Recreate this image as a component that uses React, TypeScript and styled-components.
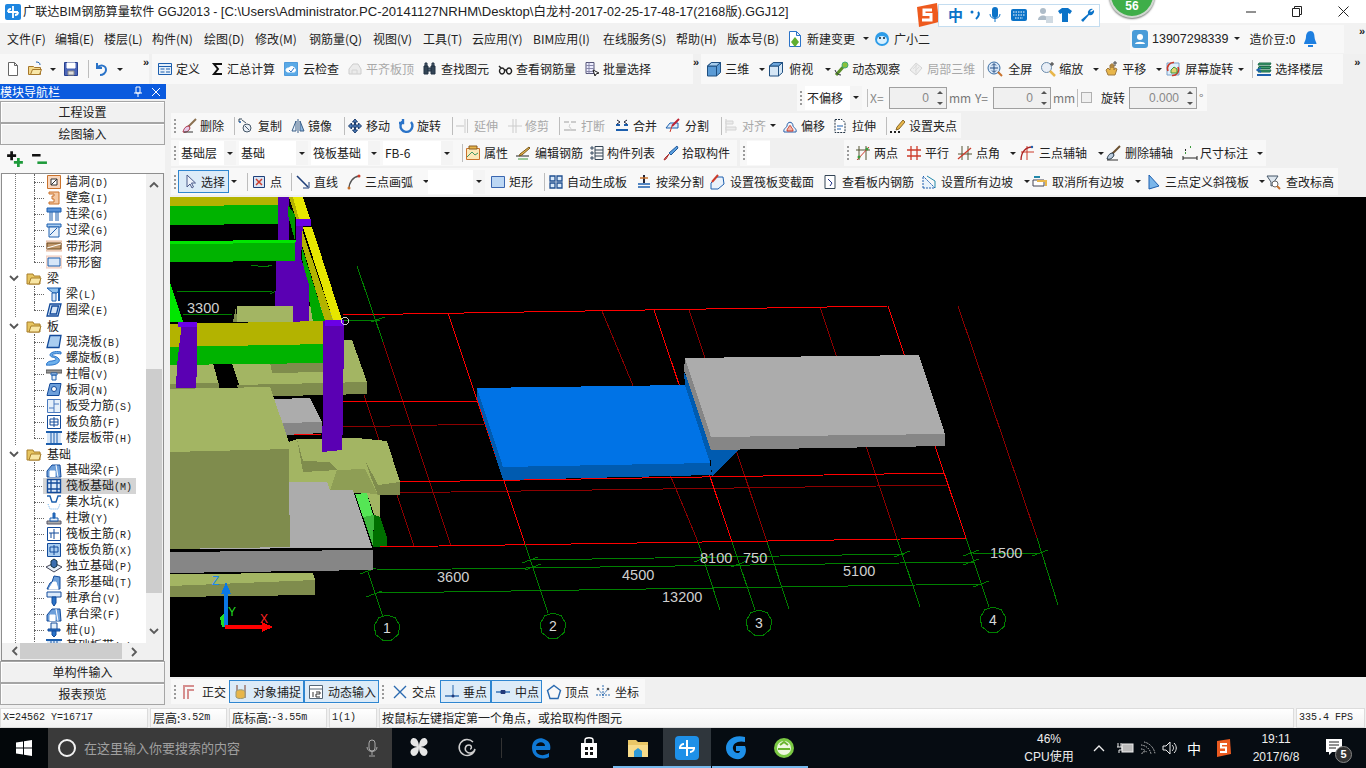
import React from 'react';
import styled, { createGlobalStyle } from 'styled-components';

const Global = createGlobalStyle`
  html, body { margin: 0; padding: 0; background: #f0f0f0; overflow: hidden; }
  * { box-sizing: border-box; }
  #root { width: 1366px; height: 768px; }
`;

const UI = `"Liberation Sans", "Noto Sans CJK SC", sans-serif`;
const CJK = `"Noto Sans CJK SC", "Liberation Sans", sans-serif`;

const Page = styled.div`
  position: relative; width: 1366px; height: 768px; overflow: hidden; display: flex; flex-direction: column;
  background: #f0f0f0; font: 12px/16px ${CJK}; color: #1c1c1c;
`;

/* ---------- title + menu ---------- */
const TitleBar = styled.div`height: 23px; flex: none; background: #fff; display: flex; align-items: center; padding-left: 5px; gap: 2px;`;
const TitleText = styled.div`font: 12.2px/16px ${UI}; white-space: nowrap; color: #222;`;
const TitlePath = styled.span`font-size: 13.1px;`;
const TitleTail = styled.span`font-size: 12.5px;`;
const WinControls = styled.div`position: absolute; right: 0; top: 0; height: 23px; display: flex;`;
const WinBtn = styled.div`width: 46px; height: 23px; display: flex; align-items: center; justify-content: center;`;
const MenuBar = styled.div`height: 31px; flex: none; display: flex; align-items: center; padding-left: 7px; background: #f2f2f2;`;
const MenuItem = styled.div<{ $w?: number; $ml?: number }>`
  flex: none; white-space: nowrap; font: 12px/16px ${CJK}; color: #222;
  ${p => p.$w ? `width:${p.$w}px;` : ''} ${p => p.$ml ? `margin-left:${p.$ml}px;` : ''}
`;
const MenuIconItem = styled(MenuItem)`display: flex; align-items: center; gap: 4px; svg, span { flex: none; }`;
const UserZone = styled.div`
  margin-left: 198px; width: 214px; height: 28px; background: #f8f8f8; display: flex; align-items: center; padding-left: 2px; font: 12px/16px ${UI};
`;
const Phone = styled.span`font: 12.5px/16px ${UI}; margin-left: 4px; color: #222;`;
const Bell = styled.svg`margin-left: 9px; flex: none;`;

/* ---------- toolbars ---------- */
const TopRow = styled.div`height: 30px; flex: none; display: flex; align-items: center;`;
const Bar = styled.div<{ $w: number; $ml?: number; $pl?: number }>`
  flex: none; width: ${p => p.$w}px; margin-left: ${p => p.$ml || 0}px; padding-left: ${p => p.$pl || 0}px;
  height: 100%; display: flex; align-items: center; background: #f8f8f8; white-space: nowrap;
`;
const ToolRowBox = styled.div<{ $h: number; $pt?: number }>`
  height: ${p => p.$h}px; flex: none; display: flex; align-items: stretch; padding-top: ${p => p.$pt || 0}px; padding-bottom: 2px;
`;
const ToolEl = styled.div<{ $w: number; $off?: boolean; $gap?: number }>`
  flex: none; width: ${p => p.$w}px; display: flex; align-items: center; gap: ${p => p.$gap ?? 3}px; font: 12px/16px ${CJK};
  color: ${p => p.$off ? '#a8a8a8' : '#222'};
  svg { flex: none; ${p => p.$off ? 'opacity: .45;' : ''} }
`;
const Caret = styled.span<{ $ml?: number }>`
  display: inline-block; flex: none; width: 0; height: 0; margin-left: ${p => p.$ml ?? 7}px;
  border-left: 3px solid transparent; border-right: 3px solid transparent; border-top: 3px solid #222;
`;
const Sep = styled.span<{ $w?: number }>`
  flex: none; width: ${p => p.$w || 1}px; height: 18px; display: flex; justify-content: center;
  &::before { content: ''; width: 1px; height: 100%; background: #bdbdbd; }
`;
const Grip = styled.span<{ $w?: number }>`
  flex: none; width: ${p => p.$w || 10}px; height: 14px; padding-left: 3px;
  &::before { content: ''; display: block; width: 2px; height: 100%;
    background: repeating-linear-gradient(#9a9a9a 0 2px, transparent 2px 4px); }
`;
const More = styled.span<{ $ml?: number }>`
  flex: none; margin-left: ${p => p.$ml || 0}px; font: bold 11px/11px ${UI}; color: #222; align-self: flex-start; margin-top: 3px; letter-spacing: -1px;
`;
const Spacer = styled.span<{ $w: number }>`flex: none; width: ${p => p.$w}px;`;
const SelectBox = styled.div<{ $w: number; $mr?: number }>`
  flex: none; width: ${p => p.$w}px; margin-right: ${p => p.$mr ?? 3}px; height: 24px; background: #fff; position: relative;
  display: flex; align-items: center; padding-left: 2px; font: 12px/16px ${CJK}; color: #222;
`;
const SelectArrow = styled.span`
  position: absolute; right: 0; top: 0; bottom: 0; width: 12px; background: #f4f4f4; display: flex; align-items: center; justify-content: center;
`;
const Label = styled.span<{ $w?: number; $c?: string }>`
  flex: none; ${p => p.$w ? `width:${p.$w}px;` : ''} color: ${p => p.$c || '#222'}; font: 12px/16px ${CJK};
`;
const Spin = styled.div<{ $w: number }>`
  flex: none; width: ${p => p.$w}px; height: 22px; border: 1px solid #a0a0a0; background: #f0f0f0; display: flex; align-items: center; justify-content: flex-end;
  font: 12px/16px ${UI}; color: #888; position: relative; padding-right: 17px;
`;
const SpinArrows = styled.span`
  position: absolute; right: 3px; top: 3px; bottom: 3px; display: flex; flex-direction: column; justify-content: space-between;
  i { width: 0; height: 0; border-left: 3px solid transparent; border-right: 3px solid transparent; }
  i:first-child { border-bottom: 3px solid #555; }
  i:last-child { border-top: 3px solid #555; }
`;
const Check = styled.span`flex: none; width: 11px; height: 11px; border: 1px solid #b0b0b0; background: #f0f0f0;`;
const Pressed = styled.div<{ $w: number; $gap?: number }>`
  flex: none; width: ${p => p.$w}px; height: 23px; background: #dcebf8; border: 1px solid #2f86d0; display: flex; align-items: center; gap: ${p => p.$gap ?? 4}px; padding-left: 3px; font: 12px/16px ${CJK}; color: #222;
`;
const Work = styled.div`width: 1196px; flex: none; display: flex; flex-direction: column; height: 100%;`;
const Body = styled.div`flex: none; height: 624px; display: flex;`;
const CanvasBox = styled.div`height: 480px; flex: none; background: #000; overflow: hidden;`;
const Drawing = styled.svg`display: block;`;

/* ---------- side panel ---------- */
const Side = styled.div`width: 166px; margin-right: 4px; flex: none; display: flex; flex-direction: column; height: 100%;`;
const SideHead = styled.div`
  height: 15px; flex: none; background: #0a5ade; color: #fff; display: flex; align-items: center; font: 12px/15px ${CJK}; margin-bottom: 2px;
`;
const PinIcon = styled.svg`margin-left: 72px; flex: none;`;
const CloseIcon = styled.svg`margin-left: 7px; flex: none;`;
const SideBtn = styled.div`
  height: 22px; flex: none; width: 165px; background: #f1f1f1; border: 1px solid #a5a5a5; box-shadow: inset 1px 1px 0 #fff; display: flex; align-items: center; justify-content: center;
  font: 12px/16px ${CJK}; color: #222;
`;
const PlusBar = styled.div`height: 28px; flex: none; width: 165px; background: #f8f8f8; display: flex; align-items: center; padding-left: 6px; gap: 7px;`;
const TreeBox = styled.div`
  height: 488px; width: 163px; margin-left: 1px; flex: none; border: 1px solid #8e8e8e; background: #f0f0f0; display: grid;
  grid-template-columns: 144px 16px; grid-template-rows: 469px 16px; position: relative;
`;
const TreeList = styled.div`background: #fff; overflow: hidden; display: flex; flex-direction: column;`;
const Row = styled.div<{ $item?: boolean; $last?: boolean }>`
  height: 16px; flex: none; position: relative; display: flex; align-items: center; white-space: nowrap;
  padding-left: ${p => p.$item ? 41 : 6}px; color: #222; font: 12px/16px ${CJK};
  background-image: linear-gradient(#777 50%, transparent 50%);
  background-size: 1px 2px; background-position: 13px 0; background-repeat: repeat-y;
  ${p => p.$item ? `
    &::before { content: ''; position: absolute; left: 32px; top: 0; height: ${p.$last ? 8 : 16}px; border-left: 1px dotted #666; }
    &::after { content: ''; position: absolute; left: 32px; width: 10px; top: 8px; border-top: 1px dotted #666; }
  ` : ''}
`;
const RowInner = styled.div<{ $sel?: boolean }>`
  display: flex; align-items: center; height: 16px; gap: 4px; padding: 0 4px 0 3px; position: relative; z-index: 1;
  background: ${p => p.$sel ? '#d4d4d4' : 'transparent'};
`;
const Key = styled.span`font: 10px/16px "Liberation Mono", monospace; color: #222;`;
const Folder = styled.div`display: flex; align-items: center; gap: 6px; z-index: 1; background: #fff;`;
const FolderName = styled.span`margin-left: -1px;`;
const VScroll = styled.div`
  grid-column: 2; grid-row: 1; background: #f0f0f0; display: flex; flex-direction: column; align-items: center; position: relative; padding-top: 5px;
`;
const VThumb = styled.div`position: absolute; left: 0; right: 0; top: 195px; height: 224px; background: #cdcdcd;`;
const HScroll = styled.div`grid-column: 1 / 3; grid-row: 2; background: #f0f0f0; position: relative; display: flex; align-items: center; padding-left: 7px;`;
const HThumb = styled.div`position: absolute; left: 18px; width: 102px; top: 0; bottom: 0; background: #cdcdcd;`;
const ArrowBottom = styled.span`position: absolute; bottom: 3px;`;
const ArrowRight = styled.span`position: absolute; right: 22px; top: 2px;`;

/* ---------- status + taskbar ---------- */
const Status = styled.div`height: 20px; flex: none; display: flex; gap: 2px; padding-right: 1px;`;
const Cell = styled.div<{ $w?: number; $grow?: boolean }>`
  ${p => p.$w ? `width:${p.$w}px; flex:none;` : ''} ${p => p.$grow ? 'flex:1;' : ''}
  background: linear-gradient(#ffffff, #f2f2f2); border: 1px solid #dcdcdc; display: flex; align-items: center; padding-left: 2px;
  font: 12px/16px ${CJK}; color: #222; white-space: nowrap;
`;
const Task = styled.div`height: 40px; flex: none; background: #060c12; display: flex; align-items: stretch; color: #eee;`;
const Start = styled.div`width: 48px; flex: none; background: #03070a; display: flex; align-items: center; justify-content: center;`;
const Search = styled.div`width: 344px; flex: none; background: #3a3a3a; display: flex; align-items: center; padding-left: 9px; gap: 7px; position: relative;`;
const SearchText = styled.span`font: 13px/16px ${CJK}; color: #a0a0a0;`;
const Mic = styled.span`position: absolute; left: 316px; top: 11px;`;
const Slot = styled.div<{ $w?: number; $ml?: number; $on?: boolean; $bar?: boolean }>`
  flex: none; width: ${p => p.$w || 48}px; margin-left: ${p => p.$ml || 0}px; display: flex; align-items: center; justify-content: center; position: relative;
  background: ${p => p.$on ? '#2f363c' : 'transparent'};
  ${p => p.$bar ? `&::after { content:''; position:absolute; left:0; right:0; bottom:0; height:2px; background:#76b9ed; }` : ''}
`;
const TaskSep = styled.span`width: 1px; height: 20px; background: #333; align-self: center; flex: none; margin-left: 10px; margin-right: 15px;`;
const TrayCell = styled.div<{ $w: number; $ml?: number }>`
  flex: none; width: ${p => p.$w}px; margin-left: ${p => p.$ml || 0}px; display: flex; flex-direction: column; align-items: center; justify-content: center;
  font: 12px/18px ${UI}; color: #eee; position: relative;
`;
const Ime = styled.span`font: 14px/16px ${CJK}; color: #fff;`;
const Badge = styled.span`
  position: absolute; left: 24px; top: 18px; width: 17px; height: 17px; border-radius: 50%; background: #333; border: 1px solid #888;
  font: bold 11px/15px ${UI}; text-align: center; color: #fff;
`;

/* ---------- overlays ---------- */
const Sogou = styled.div`
  position: absolute; left: 916px; top: 3px; width: 184px; height: 24px; display: flex; align-items: center;
`;
const SogouBar = styled.div`
  margin-left: -1px; width: 162px; height: 23px; background: #fff; border: 1px solid #c4ddf0; display: flex; align-items: center; padding-left: 9px;
`;
const SogouZh = styled.span`font: bold 15px/18px ${CJK}; color: #0b73c8; width: 21px;`;
const Orb = styled.div`
  position: absolute; left: 1109px; top: -28px; width: 46px; height: 46px; border-radius: 50%; background: #3fae49; border: 2px solid #d0d8d0; box-shadow: 0 1px 2px #777;
  display: flex; align-items: flex-end; justify-content: center; padding-bottom: 3px; font: bold 12px/14px ${UI}; color: #fff;
`;

/* ---------- icons ---------- */
const B = '#1d5fae', O = '#c9722c', R = '#cc3b2a', Y = '#e8b64a', GR = '#3c9a3c';
const S = (p: React.SVGProps<SVGPathElement> & { d: string; c?: string; w?: number; f?: string }) =>
  <path d={p.d} stroke={p.c || B} strokeWidth={p.w || 1} fill={p.f || 'none'} strokeDasharray={p.strokeDasharray} />;

const ICONS: Record<string, React.ReactNode> = {
  new: <S d="M3.5 1.5h6l3 3v10h-9z M9.5 1.5v3h3" c="#666" f="#fff" />,
  change: <><S d="M2.5 .5h7l4 4v11h-11z M9.5 .5v4h4" c="#2a73c8" f="#fff" /><path d="M8 6l4 5-4 5-4-5z" fill="#5fae2e" /></>,
  open: <><S d="M1.5 5.5h5l1 1h6v7h-12z" c="#a6772a" f="#f3d98c" /><S d="M3.5 13.5l2-5h9l-2 5z" c="#a6772a" f="#f8e7a8" /><S d="M9 1c3 0 4 1 4 3" c={B} /></>,
  save: <><S d="M1.5 1.5h13v13h-13z" c="#28408e" f="#4c66b8" /><S d="M4 2h8v5H4z" c="#fff" f="#fff" /><S d="M5 10h6v4H5z" c="#888" f="#ddd" /></>,
  undo: <S d="M4 2v5h5 M4 7c3-4 9-3 9 2 0 3-3 5-6 5" c="#2a73c8" w={2} />,
  define: <><S d="M1.5 2.5h13v11h-13z" f="#e6f0fa" /><S d="M1.5 5.5h13 M3.5 8h4 M3.5 11h4 M9 8h4 M9 11h4" /></>,
  sigma: <S d="M12 3H4l4 5-4 5h8" c="#111" w={2} />,
  cloud: <><S d="M1.5 1.5h13v13h-13z" c="#4f9bdc" f="#5aa9e6" /><S d="M3 9c0-2 2-2 3-2 1-2 5-2 5 0 2 0 2 4 0 4H5c-2 0-2-2-2-2z" c="#fff" f="#fff" /><S d="M6 9l2 2 3-4" c="#2a73c8" /></>,
  flush: <><S d="M2 13h12V8l-3-5H6L2 8z" c="#999" f="#ddd" /><S d="M5 13V9h5v4" c="#aaa" /></>,
  binoc: <><S d="M2 5h4v8H2z M9 5h4v8H9z" c="#234" f="#345" /><S d="M3 2h2v3H3z M10 2h2v3h-2z M6 7h3v3H6z" c="#234" f="#567" /></>,
  glasses: <><S d="M5 7a2.5 3 0 1 0 .1 0z M12 7a2.5 3 0 1 0 .1 0z M7.5 9h2 M4 7l-2-2" c="#222" w={1.4} /></>,
  batch: <><S d="M2 1.5h8v11H2z" c="#557" f="#eef" /><S d="M2 4.5h8 M2 7.5h8 M2 10.5h8 M5 1.5v11" c="#88a" /><S d="M9 9l6 3-3 1-1 2z" c="#222" f="#fff" /></>,
  cube: <><S d="M1.5 5l4-3.5h9v10l-4 3.5h-9z" c="#1f4f80" f="#5b9bd5" /><S d="M1.5 5h9v10 M10.5 5l4-3.5" c="#1f4f80" /><S d="M1.5 5l4-3.5h9l-4 3.5z" c="#1f4f80" f="#a7cdec" /></>,
  top: <><S d="M1.5 5l4-3.5h9v10l-4 3.5h-9z" c="#1f4f80" f="#d5e6f5" /><S d="M1.5 5h9v10 M10.5 5l4-3.5" c="#1f4f80" /><S d="M5.5 1.5h9l-4 3.5h-9z" c="#1f4f80" f="#6ba5dc" /></>,
  orbit: <><S d="M3 14l8-9" c="#5a8f2a" w={3} /><circle cx="12" cy="4" r="3" fill="#8ac13c" stroke="#4a7" /><S d="M2 9c1 3 3 5 6 5" c="#334" /></>,
  local3d: <><S d="M2 9l6-7 6 5-6 7z" c="#aaa" f="#e4e4e4" /><S d="M5 8l4-4 M7 10l4-4 M8 2v12" c="#bbb" /></>,
  full: <><circle cx="7" cy="7" r="6" fill="#d8e6f6" stroke="#3a6ea5" /><S d="M7 3v8 M3 7h8 M5 4.5l2-2 2 2 M5 9.5l2 2 2-2" c="#234e86" /><S d="M11 11l4 4" c={O} w={2} /></>,
  zoom: <><circle cx="6.5" cy="6.5" r="5" fill="#e8eef6" stroke="#6a8aaa" /><S d="M10 10l5 5" c={Y} w={2.5} /><S d="M12 1v4 M10 3h4" c="#333" /></>,
  pan: <><S d="M3 9l2 5h7l2-6-2-1-1 2V4h-1v3V3H8v4-3H7v5L5 7z" c="#a07a40" f={Y} /><S d="M12 0v5 M10 2h4" c="#444" /></>,
  rot: <><S d="M2 2h12v12H2z" c="#7aa0c8" f="#dfeefb" /><S d="M3 10C1 5 5 1 9 1.500 M13 6c2 5-2 9-6 8.500" c={R} w={1.6} /><S d="M6 9l3-3 3 2v4H6z" c={GR} f="#e6d270" /></>,
  floor: <><S d="M2 11h12l1-2H3z M2 7.500h12l1-2H3z M2 4h12l1-2H3z" c="#1d6b4a" f="#3d9c6c" /><S d="M5 7L1 9l4 2" c="#1a5fae" w={1.5} /><S d="M1 14h14" c={B} w={2} /></>,
  del: <><S d="M15 1L7 9" c="#8a7050" w={2} /><S d="M8 8c-3 0-5 2-6 6 3 1 6-1 7-4z" c="#a34" f="#e7c9e8" /><S d="M3 14h9" c="#333" /></>,
  copy: <><S d="M2 4V1h3" c="#345" /><circle cx="3" cy="4" r="1" fill={B} /><circle cx="10" cy="10" r="4" fill="#e8eef6" stroke="#456" /><S d="M5 2l4 3 M8 8l4 4" c="#456" /></>,
  mirror: <><S d="M6 3v10H2z" c="#3a5f88" f="#e8f0f8" /><S d="M10 3v10h4z" c="#3a5f88" f="#90b8e0" /><S d="M8 1v14" c="#3a5f88" /></>,
  move: <S d="M8 1l2.500 3h-2v3h3V5l3 3-3 3V9h-3v3h2L8 15l-2.500-3h2V9h-3v2l-3-3 3-3v2h3V4h-2z" c="#1e3f70" f="#4d7db8" />,
  rotate: <S d="M13 4a6 6 0 1 1-8-1 M5 1v4H1" c="#2a73c8" w={2.4} />,
  extend: <><S d="M1 8h8" c="#888" /><S d="M12.500 1v14 M10 1v14" c="#999" /></>,
  trim: <S d="M1 8h14 M6 1v14 M9 1v14" c="#999" />,
  break: <><S d="M2 4h5 M9 4h5 M2 12h12" c="#999" w={2} /><S d="M8 6l-1 3 2 1-1 3" c="#aaa" /></>,
  merge: <><S d="M2 12h12" c={B} w={2} /><S d="M2 7h4 M10 7h4" c={B} w={2} /><S d="M3 2l3 2-3 2 M13 2l-3 2 3 2" c="#223" /></>,
  split: <><S d="M2 10h12V5H6z" c={B} f="#dcebf8" /><S d="M15 1L8 8" c="#b23" w={2} /><S d="M8 8l-2 6" c={R} /></>,
  align: <><S d="M3 1v14" c="#999" /><S d="M3 3h7v3H3z M3 9h10v3H3z" c="#aaa" f="#ddd" /></>,
  offset: <><S d="M2 14c-1-3 2-4 3-6 0-5 6-5 6 0 1 2 4 3 3 6z" c="#2a5fa8" f="#eef4fa" /><S d="M5 13c0-2 1-3 2-4 0-2 2-2 2 0 1 1 2 2 2 4z" c={R} f="#f3b7a8" /></>,
  stretch: <><S d="M3 1.500h7l3 3v10H3z" c="#234" f="#fff" strokeDasharray="2 1" /><S d="M5 8h6 M5 11h4" c={B} /></>,
  hold: <><S d="M14 2L8 9l-1 3 3-1 6-7z" c="#8a6a2a" f={Y} /><S d="M1 14h2 M5 14h2 M9 14h2" c="#222" w={2} /></>,
  attr: <><S d="M1.500 3.500h13v11h-13z" c={O} f="#fbe8b8" /><S d="M2 12l5-5 3 3 3-2" c="#496" /><S d="M4 1h8v3H4z" c="#8a5b20" f={Y} /></>,
  editbar: <><S d="M1 11h13" c="#222" /><S d="M14 2L5 9l-1 2 3-1 8-7z" c="#7a5a20" f={Y} /><S d="M3 14h10" c={GR} /></>,
  list: <><S d="M2 2h2v2H2z M2 7h2v2H2z M2 12h2v2H2z" c="#456" f="#bcd" /><S d="M6 1.500h8v13H6z M6 5h8 M6 8h8 M6 11h8" c="#345" /></>,
  pick: <><S d="M14 1l1 2-7 7-2-2z" c="#245a9a" f="#5aa0e0" /><S d="M6 9l-3 5-2 1 1-2z" c="#a33" f="#e88" /></>,
  p2: <><S d="M4 1v14 M11 1v14 M1 5h14" c="#553" /><S d="M2 15L14 2" c={R} /><circle cx="4" cy="12" r="1.500" fill={GR} /><circle cx="12" cy="4" r="1.500" fill={GR} /></>,
  parallel: <S d="M5 1v14 M11 1v14 M1 5h14 M1 11h14" c={R} w={1.3} />,
  angle: <><S d="M5 1v14 M11 1v14 M1 9h14" c="#553" /><S d="M1 14L14 3" c={R} w={1.3} /></>,
  arc3: <><S d="M8 1v14 M2 7h13" c={R} /><S d="M2 15C2 7 7 2 13 2" c="#a22" w={1.3} /><circle cx="13" cy="2" r="1.200" fill={B} /></>,
  delaxis: <><S d="M15 1L7 9" c="#6a5030" w={2} /><S d="M8 8c-3 0-5 2-6 6 3 1 6-1 7-4z" c="#234" f="#bcd" /><S d="M2 15h11" c="#333" /></>,
  dim: <><S d="M1 13h14 M1 11v4 M15 11v4" c="#222" /><S d="M3 8h1 M8 2h1" c={GR} w={2} /><S d="M3 5h1" c="#222" w={2} /></>,
  cursor: <S d="M5 1v12l3-3 2 4 1.500-1-2-4h4z" c="#4a5a8a" f="#eef2fa" />,
  point: <><S d="M2.500 2.500h11v11h-11z" c="#1f3f7a" f="#d8e4f4" /><S d="M5 5l6 6 M11 5l-6 6" c={R} w={1.5} /></>,
  line: <><S d="M2 2l11 11" c="#1f3f7a" w={1.6} /><S d="M14 8v6H8" c="#1f3f7a" /></>,
  arc: <><S d="M3 15C3 8 7 3 13 2" c="#555" w={1.3} /><circle cx="13" cy="2" r="1.500" fill={R} /><circle cx="3" cy="14" r="1.500" fill={O} /></>,
  rect: <S d="M1.500 2.500h13v11h-13z" c="#3a66b0" f="#bcd7f4" />,
  auto: <S d="M2 2h5v5H2z M9 2h5v5H9z M2 9h5v5H2z M9 9h5v5H9z" c="#1f4f90" f="#d8e8f8" w={1.3} />,
  beamsplit: <><S d="M2 13h12 M2 10h12" c={B} w={1.5} /><S d="M8 1v8" c="#223" w={2} /><S d="M4 4h8" c={O} w={1.5} /></>,
  section: <><S d="M1 9l6-6h6l1 7-6 5H1z" c={B} f="#eaf2fb" /><S d="M8 1L2 8" c={R} w={2} /></>,
  viewbar: <><S d="M3 1.500h10v13H3z" c="#345" f="#fff" /><S d="M6 5l4 4-2 3" c="#238" /></>,
  slope: <><S d="M2 14V2l12 12z" c={B} f="#eaf3fb" strokeDasharray="2 1" /><S d="M6 2l8 5v7" c="#28a" /></>,
  unslope: <><S d="M1 12h11V6H1z" c="#445" f="#fff" /><S d="M5 7h9v5" c={Y} w={2} /><S d="M2 3h6" c="#28a" w={2} /></>,
  tilt: <S d="M3 1v14l10-3z" c={B} f="#7ab6ea" />,
  elev: <><S d="M2 2h11l-4 6v3l-3 1V8z" c="#456" f="#dde6ee" /><circle cx="10" cy="10" r="3" fill="#fff" stroke="#666" /><S d="M12 12l3 3" c={O} w={2} /></>,
  ortho: <S d="M3 15V2h10 M7 15V6h6" c="#d68f8f" w={2} />,
  snap: <><S d="M4 1v13 M12 1v13" c="#7a3f2a" /><S d="M3 8c0-3 9-3 9 0v5c-1 2-8 2-9 0z" c="#997" f={Y} /></>,
  dyn: <><S d="M1.500 1.500h13v13h-13z" c="#567" f="#fff" /><S d="M1.500 5h13" c="#567" /><S d="M5 8v5 M8 8h4v2H8v3h4" c="#333" /></>,
  cross: <S d="M2 2l12 12 M14 2L2 14" c="#2a6ab0" w={1.4} />,
  perp: <><S d="M1 12h14" c="#2a6ab0" w={1.4} /><S d="M9 1v11" c="#2a6ab0" /><circle cx="9" cy="12" r="1.500" fill="#223a7a" /></>,
  mid: <><S d="M1 8h14" c="#2a6ab0" w={1.4} /><S d="M6 6.500h4v3H6z" c="#223a7a" f="#223a7a" /></>,
  vertex: <S d="M8 1.500l6.500 5-2.500 8H4l-2.500-8z" c="#2a6ab0" w={1.4} />,
  coord: <><S d="M8 1v13 M1 11h14 M3 5l5 6 5-6" c="#2a6ab0" strokeDasharray="2 1" /><circle cx="3" cy="5" r="1.300" fill="#555" /><circle cx="13" cy="5" r="1.300" fill="#555" /></>,
  /* tree */
  wallhole: <><S d="M1.500 1.500h13v13h-13z" c={O} f="#f8d8c0" /><S d="M5 5h6v6H5z" c="#333" f="#fff" /><S d="M5 11l6-6" c="#333" /></>,
  niche: <S d="M3 2h10v12H3v-2h5V9H6V6h2V4H3z" c={O} f="#f4c9a4" />,
  lintel: <><S d="M1 2h14v4H1z" c={B} f="#5a93d8" /><S d="M4 6v9 M12 6v9 M6 6v9 M10 6v9" c={B} /></>,
  over: <><S d="M1 2h14v3H1z" c={B} f="#a9cdf0" /><S d="M3 5h10v10H3z" c={B} f="#e6f0fa" /><S d="M4 13l7-7" c={B} /></>,
  strip: <><S d="M0 3h16v10H0z" c="#e4b8a0" f="#f6dcc8" /><S d="M1 5h14v6H1z" c="#6b4a20" f="#c0976a" /><S d="M1 10l14-4" c="#fff" /></>,
  stripwin: <><S d="M0 2h16v12H0z" c="#f0c8b8" f="#fae6dc" /><S d="M2 4h12v8H2z" c={B} f="#d6e6f8" /></>,
  beam: <><S d="M1 2h14l-4 5H7z" c={B} f="#8fc0ec" /><S d="M6 7h4v8H6z" c={B} f="#d6e6f8" /><S d="M13 2v13" c={B} w={2} /></>,
  ring: <S d="M4 2h11l-3 12H1z M6 4h6.500l-2 8H4z" c="#124a9a" f="#d6e6f8" w={1.3} />,
  slab: <S d="M4 1.500h11l-2 12H1z" c="#124a9a" f="#a9cdf0" w={1.3} />,
  spiral: <S d="M15 2C6 0 1 5 6 7c5 1 6 3 0 4-3 0-5 1-6 4 8 1 15-2 13-6-2-3-7-3-7-4 0-1 5-2 9-1z" c="#2a73c8" f="#6db0ec" />,
  cap: <><S d="M0 4h16v3H0z" c="#555" f="#999" /><S d="M5 7h6v2H5z M6 9h4v5H6z" c={B} f="#e6f0fa" /></>,
  hole: <><S d="M4 1.500h11l-2 12H1z" c="#124a9a" f="#6d9fda" /><circle cx="8" cy="7" r="2.500" fill="#fff" stroke="#124a9a" /></>,
  sbar: <><S d="M1.500 1.500h13v13h-13z" c="#4a7ac0" f="#e6f0fa" /><S d="M8 2v12 M8 6h5 M3 10h5" c="#4a7ac0" /></>,
  nbar: <><S d="M1.500 1.500h13v13h-13z" c="#124a9a" f="#fff" /><S d="M4 5h8v6H4z M4 8h8 M8 3v10" c="#124a9a" /></>,
  band: <><S d="M1 3h14v10H1z" c="none" f="#d6e6f8" /><S d="M0 2h16 M0 14h16" c={B} w={2} /><S d="M5 3v10 M8 3v10 M11 3v10" c={B} /></>,
  fbeam: <><S d="M1 15V9l5-6h8l1 12z" c="#124a9a" f="#6d9fda" /><S d="M4 15V9h5v6" c="#fff" f="#fff" /><S d="M10 3l2 12" c="#fff" /></>,
  raft: <><S d="M1.500 1.500h13v13h-13z" c="#124a9a" f="#dceafa" w={1.4} /><S d="M5 1.500v13 M11 1.500v13 M1.500 5h13 M1.500 11h13" c="#124a9a" w={1.3} /></>,
  pit: <><S d="M1 2h3l2 6h4l2-6h3" c="#1a5fae" w={1.4} /><S d="M2 10l2 5h8l2-5" c="#6db0ec" strokeDasharray="1 1" /></>,
  pier: <><S d="M1 11h14v3H1z" c="#556" f="#aaa" /><S d="M4 8h8v3H4z" c={B} f="#e6f0fa" /><S d="M7 3h2v5H7z" c={B} f="#2a73c8" /></>,
  rmain: <><S d="M1.500 1.500h13v13h-13z" c="#124a9a" f="#fff" /><S d="M8 3v10 M3 7h10 M5 7v5" c="#124a9a" /></>,
  rneg: <><S d="M1.500 1.500h13v13h-13z" c="#124a9a" f="#a9cdf0" /><S d="M4 5h8v5H4z M8 3v10" c="#124a9a" /></>,
  iso: <><S d="M0 9l8-4 8 4-8 5z" c="#445" f="#e6f0fa" /><S d="M5 3l3-2 3 2v5l-3 2-3-2z" c="#134" f="#3a6eb0" /></>,
  strip2: <><S d="M1 15l3-6 2-1 2-6 6 1v12z" c="#124a9a" f="#6d9fda" /><S d="M3 15l3-5 1-2h3l2 7z" c="#fff" f="#fff" /></>,
  pilecap: <><S d="M1 2h14v5H1z" c="#124a9a" f="#dceafa" /><S d="M6 7h4v6L8 16l-2-3z" c="#124a9a" f="#2a73c8" /></>,
  pile: <><S d="M5 1h6v7H5z" c="#124a9a" f="#e6f0fa" /><S d="M2 7h12v2H2z" c="#124a9a" f="#2a73c8" /><S d="M6 9h4v4l-2 2-2-2z" c="#124a9a" f="#2a73c8" /></>,
  folder: <><S d="M1 4h6l1 2h6v8H1z" c="#a87f2a" f="#e7c560" /><S d="M3 14l2-6h10l-2 6z" c="#a87f2a" f="#f8e6a4" /></>,
  plus: <><S d="M5 1v8 M1 5h8" c="#111" w={2.4} /><S d="M11 7v8 M7 11h8" c="#1d9a3a" w={2.4} /></>,
  minus: <><S d="M1 4h8" c="#111" w={2.4} /><S d="M6 11h9" c="#1d9a3a" w={2.4} /></>,
};
const I: React.FC<{ n: string; s?: number }> = ({ n, s = 16 }) =>
  <svg width={s} height={s} viewBox="0 0 16 16">{ICONS[n]}</svg>;

type T = [string, string, number, boolean?, boolean?, number?];
const Tool: React.FC<{ t: T }> = ({ t: [n, l, w, caret, off, gap] }) => (
  <ToolEl $w={w} $off={off} $gap={gap}><I n={n} /><span>{l}</span>{caret && <Caret />}</ToolEl>
);

const Chev: React.FC<{ d: 'up' | 'down' | 'left' | 'right'; c?: string }> = ({ d, c = '#5a5a5a' }) => {
  const pts = { up: '2,8 6,4 10,8', down: '2,4 6,8 10,4', left: '8,2 4,6 8,10', right: '4,2 8,6 4,10' }[d];
  return <svg width="12" height="12" viewBox="0 0 12 12"><polyline points={pts} fill="none" stroke={c} strokeWidth="1.800" /></svg>;
};

/* ---------- tree data ---------- */
type N = { f?: string; i?: string; l?: string; k?: string; sel?: boolean; last?: boolean };
const TREE: N[] = [
  { i: 'wallhole', l: '墙洞', k: '(D)' }, { i: 'niche', l: '壁龛', k: '(I)' }, { i: 'lintel', l: '连梁', k: '(G)' }, { i: 'over', l: '过梁', k: '(G)' },
  { i: 'strip', l: '带形洞' }, { i: 'stripwin', l: '带形窗', last: true },
  { f: '梁' }, { i: 'beam', l: '梁', k: '(L)' }, { i: 'ring', l: '圈梁', k: '(E)', last: true },
  { f: '板' }, { i: 'slab', l: '现浇板', k: '(B)' }, { i: 'spiral', l: '螺旋板', k: '(B)' }, { i: 'cap', l: '柱帽', k: '(V)' }, { i: 'hole', l: '板洞', k: '(N)' },
  { i: 'sbar', l: '板受力筋', k: '(S)' }, { i: 'nbar', l: '板负筋', k: '(F)' }, { i: 'band', l: '楼层板带', k: '(H)', last: true },
  { f: '基础' }, { i: 'fbeam', l: '基础梁', k: '(F)' }, { i: 'raft', l: '筏板基础', k: '(M)', sel: true }, { i: 'pit', l: '集水坑', k: '(K)' }, { i: 'pier', l: '柱墩', k: '(Y)' },
  { i: 'rmain', l: '筏板主筋', k: '(R)' }, { i: 'rneg', l: '筏板负筋', k: '(X)' }, { i: 'iso', l: '独立基础', k: '(P)' }, { i: 'strip2', l: '条形基础', k: '(T)' },
  { i: 'pilecap', l: '桩承台', k: '(V)' }, { i: 'fbeam', l: '承台梁', k: '(F)' }, { i: 'pile', l: '桩', k: '(U)' }, { i: 'band', l: '基础板带', k: '(W)' },
];

/* ---------- canvas data ---------- */
type Ln = [number, number, number, number];
const RED: Ln[] = [
  [343, 315, 888, 306], [343, 402, 477, 401], [373, 547, 967, 538], [400, 482, 945, 473], [286, 435, 322, 434],
  [448, 313, 525, 544], [654, 310, 732, 542], [888, 306, 966, 538],
];
const DARK: Ln[] = [
  [343, 427, 485, 424], [380, 493, 948, 485], [364, 395, 414, 546], [383, 342, 451, 546], [689, 310, 767, 542],
  [820, 307, 897, 539], [958, 306, 1037, 538], [602, 311, 698, 542],
];
const GREEN: Ln[] = [
  [357, 266, 383, 342], [525, 544, 548, 613], [732, 542, 755, 610], [966, 538, 989, 607], [767, 542, 789, 609], [897, 539, 920, 607],
  [1037, 538, 1058, 605], [698, 542, 720, 610], [368, 572, 383, 617],
  [377, 570, 975, 562], [530, 560, 905, 554], [973, 553, 1040, 553], [377, 593, 983, 584], [177, 292, 273, 291], [183, 315, 233, 314], [343, 320, 380, 320],
  [360, 574, 376, 568], [366, 597, 382, 591], [522, 563, 538, 557], [525, 570, 541, 564], [694, 562, 710, 556], [731, 567, 747, 561], [894, 557, 910, 551], [963, 556, 979, 550],
  [963, 565, 979, 559], [973, 587, 989, 581], [1032, 556, 1048, 550], [270, 294, 280, 289], [371, 322, 385, 317], [251, 265, 265, 267], [265, 267, 272, 265],
];
type Pg = [string, string];
const SHAPES: Pg[] = [
  ['170,197 278,197 278,206 170,206', '#b3b300'],
  ['170,206 278,205 278,224 170,225', '#00b300'],
  ['278,197 289,197 289,240 295,240 295,322 275,322 276,260 278,240', '#5a00b3'],
  ['288,205 295,215 295,241 288,215', '#009a00'],
  ['170,241 296,240 296,261 170,262', '#00b300'],
  ['170,241 296,240 296,243 170,244', '#00e600'],
  ['237,306 325,306 340,322 236,322', '#a3b563'],
  ['236,306 237,322 233,322', '#7f8c4d'],
  ['302,247 325,321 313,322 302,258', '#00a800'],
  ['296,226 303,226 301,258 309,285 309,322 293,322', '#5a00b3'],
  ['296,219 311,219 311,226 296,226', '#6a00e6'],
  ['289,197 293,197 299,219 296,219', '#b3b300'],
  ['293,197 303,197 310,219 299,219', '#e6e600'],
  ['302,230 333,320 325,321 302,245', '#b3b300'],
  ['303,227 312,227 342,320 333,320', '#e6e600'],
  ['170,282 183,322 170,322', '#00e600'],
  ['170,365 213,363 219,385 219,389 170,389', '#a3b563'],
  ['170,384 219,383 219,389 170,389', '#7f8c4d'],
  ['232,363 326,360 326,340 352,340 367,382 240,387', '#a3b563'],
  ['270,362 323,361 323,372 272,373', '#7f8c4d'],
  ['237,385 367,382 367,394 240,397', '#7f8c4d'],
  ['170,324 326,321 326,345 170,347', '#b3b300'],
  ['170,347 326,344 326,363 170,365', '#00b300'],
  ['182,322 197,322 197,367 196,388 176,388 177,365', '#5a00b3'],
  ['178,322 197,322 197,327 178,327', '#6a00e6'],
  ['273,399 310,398 322,422 282,423', '#acacac'],
  ['282,423 322,422 322,433 285,435', '#868686'],
  ['170,389 270,387 289,442 289,450 170,452', '#a3b563'],
  ['170,452 290,449 290,547 170,549', '#7f8c4d'],
  ['289,442 297,439 357,438 387,441 400,482 400,495 377,495 353,490 330,490 327,482 289,482', '#a3b563'],
  ['297,439 303,472 337,470 330,462 303,461', '#7f8c4d'],
  ['337,470 365,469 378,495 330,490', '#8e9e55'],
  ['378,485 400,482 400,495 378,495', '#7f8c4d'],
  ['365,460 378,485 378,495 372,480', '#7f8c4d'],
  ['323,321 344,320 343,420 342,450 322,452 323,400', '#5a00b3'],
  ['325,320 344,320 344,326 325,326', '#6a00e6'],
  ['289,482 327,482 330,490 353,490 372,548 170,549 290,547', '#acacac'],
  ['170,552 373,550 373,570 170,573', '#868686'],
  ['367,493 380,495 380,517 374,515', '#a3b563'],
  ['355,494 367,493 373,515 363,517', '#55e655'],
  ['363,517 374,515 373,546', '#3cb83c'],
  ['374,515 380,517 387,537 387,546 373,547', '#007000'],
  ['170,574 313,573 315,580 170,586', '#a3b563'],
  ['170,586 315,580 315,595 170,597', '#7f8c4d'],
  ['477,388 503,467 503,480 477,398', '#005bb0'],
  ['503,467 710,463 712,475 503,480', '#005bb0'],
  ['477,388 685,385 710,463 503,467', '#0073e6'],
  ['684,372 690,385 712,450 710,463 685,385', '#005bb0'],
  ['710,450 738,450 712,476', '#005bb0'],
  ['685,358 711,437 711,450 684,370', '#868686'],
  ['711,437 945,434 945,446 711,450', '#868686'],
  ['685,358 919,355 945,434 711,437', '#acacac'],
];
const DIMS: [string, number, number][] = [
  ['3300', 187, 313], ['3600', 437, 582], ['4500', 622, 580], ['13200', 662, 602], ['8100', 700, 563], ['750', 743, 563], ['5100', 843, 576], ['1500', 990, 558],
];
const AXES: [string, number, number][] = [['1', 387, 628], ['2', 553, 626], ['3', 759, 623], ['4', 993, 620]];
const ring = (x: number, y: number) =>
  Array.from({ length: 9 }, (_, i) => {
    const a = (i / 9) * Math.PI * 2 - Math.PI / 2;
    return `${(x + 13 * Math.cos(a)).toFixed(1)},${(y + 13 * Math.sin(a)).toFixed(1)}`;
  }).join(' ');

const Scene: React.FC = () => (
  <Drawing width="1196" height="480" viewBox="170 197 1196 480" shapeRendering="crispEdges">
    {DARK.map((l, i) => <line key={i} x1={l[0]} y1={l[1]} x2={l[2]} y2={l[3]} stroke="#8c0000" />)}
    {RED.map((l, i) => <line key={i} x1={l[0]} y1={l[1]} x2={l[2]} y2={l[3]} stroke="#ff0000" />)}
    {GREEN.map((l, i) => <line key={i} x1={l[0]} y1={l[1]} x2={l[2]} y2={l[3]} stroke="#008000" />)}
    {AXES.map(([t, x, y]) => (
      <g key={t}>
        <polygon points={ring(x, y)} fill="none" stroke="#008000" />
        <text x={x} y={y + 5} textAnchor="middle" fontFamily="Liberation Sans" fontSize="14" fill="#d8d8d8">{t}</text>
      </g>
    ))}
    {SHAPES.map(([p, c], i) => <polygon key={i} points={p} fill={c} />)}
    {DIMS.map(([t, x, y]) => <text key={t} x={x} y={y} fontFamily="Liberation Sans" fontSize="14.500" fill="#cfcfcf">{t}</text>)}
    <circle cx="345" cy="321" r="3.500" fill="none" stroke="#ccc" />
    <polygon points="220,617 225,612 226,627 222,627" fill="#22dd22" />
    <rect x="224" y="590" width="4" height="37" fill="#0a78e6" />
    <polygon points="226,582 221,594 231,594" fill="#0a78e6" />
    <rect x="225" y="625" width="38" height="4" fill="#ff0000" />
    <polygon points="262,622 273,627 262,632" fill="#ff0000" />
    <text x="212" y="585" fontFamily="Liberation Sans" fontSize="12" fill="#1a88f0">Z</text>
    <text x="228" y="616" fontFamily="Liberation Sans" fontSize="12" fill="#22dd22">Y</text>
    <text x="260" y="623" fontFamily="Liberation Sans" fontSize="12" fill="#ff2222">X</text>
  </Drawing>
);

const App: React.FC = () => (
  <Page>
    <Global />
    <TitleBar>
      <svg width="16" height="16" viewBox="0 0 16 16"><rect width="16" height="16" rx="2" fill="#1e86e0" /><path d="M8 2v12 M3 8h10 M3 8a3 3 0 0 1 3-3 M13 8a3 3 0 0 1-3 3" stroke="#fff" strokeWidth="1.800" fill="none" /></svg>
      <TitleText>广联达BIM钢筋算量软件 GGJ2013 - <TitlePath>[C:\Users\Administrator.PC-20141127NRHM\Desktop\</TitlePath><TitleTail>白龙村-2017-02-25-17-48-17(2168版).GGJ12]</TitleTail></TitleText>
    </TitleBar>
    <MenuBar>
      {[['文件(F)', 48], ['编辑(E)', 49], ['楼层(L)', 48], ['构件(N)', 52], ['绘图(D)', 51], ['修改(M)', 54], ['钢筋量(Q)', 64], ['视图(V)', 50], ['工具(T)', 49], ['云应用(Y)', 61], ['BIM应用(I)', 70], ['在线服务(S)', 73], ['帮助(H)', 51], ['版本号(B)', 60]].map(([l, w]) => (
        <MenuItem key={l as string} $w={w as number}>{l}</MenuItem>
      ))}
      <MenuIconItem $w={77}><I n="change" /><span>新建变更</span><Caret $ml={4} /></MenuIconItem>
      <MenuIconItem $w={58} $ml={10}>
        <svg width="16" height="16" viewBox="0 0 16 16"><ellipse cx="8" cy="8" rx="7" ry="7" fill="#2d9ce8" /><ellipse cx="8" cy="9" rx="5" ry="4" fill="#d8f0ff" /><circle cx="6" cy="7" r="1" fill="#123" /><circle cx="10" cy="7" r="1" fill="#123" /></svg>
        <span>广小二</span>
      </MenuIconItem>
      <UserZone>
        <svg width="16" height="18" viewBox="0 0 16 18"><rect width="16" height="18" rx="3" fill="#4a9cd8" /><circle cx="8" cy="7" r="3" fill="#fff" /><path d="M3 14c0-3 10-3 10 0z" fill="#fff" /></svg>
        <Phone>13907298339</Phone><Caret $ml={6} />
        <MenuItem $ml={9}>造价豆:0</MenuItem>
        <Bell width="13" height="18" viewBox="0 0 13 18"><path d="M6.500 1c3 0 4 3 4 6s2 5 2 7H0c0-2 2-4 2-7s1.500-6 4.500-6z" fill="#1e7fe0" /><rect x="4" y="15" width="5" height="2" fill="#1e7fe0" /></Bell>
      </UserZone>
      <More $ml={15}>»</More>
    </MenuBar>
    <TopRow>
      <Bar $w={149} $pl={5}>
        <ToolEl $w={22}><I n="new" /></ToolEl>
        <ToolEl $w={36}><I n="open" /><Caret $ml={4} /></ToolEl>
        <ToolEl $w={21}><I n="save" /></ToolEl>
        <Sep $w={9} />
        <ToolEl $w={28}><I n="undo" /><Caret $ml={5} /></ToolEl>
        <More $ml={22}>»</More>
      </Bar>
      <Bar $w={541} $ml={3} $pl={5}>
        <Tool t={['define', '定义', 53]} />
        <Tool t={['sigma', '汇总计算', 73, false, false, 1]} />
        <Tool t={['cloud', '云检查', 64, false, false, 4]} />
        <Tool t={['flush', '平齐板顶', 75, false, true]} />
        <Tool t={['binoc', '查找图元', 75]} />
        <Tool t={['glasses', '查看钢筋量', 87]} />
        <Tool t={['batch', '批量选择', 72]} />
      </Bar>
      <More $ml={0}>»</More>
      <Bar $w={642} $ml={3} $pl={5}>
        <Tool t={['cube', '三维', 62, true]} />
        <Tool t={['top', '俯视', 65, true, false, 5]} />
        <Tool t={['orbit', '动态观察', 75]} />
        <Tool t={['local3d', '局部三维', 71, false, true]} />
        <Sep $w={8} />
        <Tool t={['full', '全屏', 53, false, false, 5]} />
        <Tool t={['zoom', '缩放', 63, true]} />
        <Tool t={['pan', '平移', 62, true]} />
        <ToolEl $w={83} $gap={4}><I n="rot" /><span>屏幕旋转</span><Caret $ml={1} /></ToolEl>
        <Sep $w={8} />
        <Tool t={['floor', '选择楼层', 68]} />
      </Bar>
      <More $ml={11}>»</More>
    </TopRow>
    <Body>
      <Side>
        <SideHead>
          <span>模块导航栏</span>
          <PinIcon width="12" height="12" viewBox="0 0 12 12"><path d="M4 1h4v6H4z M2 7h8 M6 7v4" stroke="#fff" fill="none" /></PinIcon>
          <CloseIcon width="10" height="10" viewBox="0 0 10 10"><path d="M1 1l8 8 M9 1l-8 8" stroke="#fff" /></CloseIcon>
        </SideHead>
        <SideBtn>工程设置</SideBtn>
        <SideBtn>绘图输入</SideBtn>
        <PlusBar><I n="plus" s={18} /><I n="minus" s={17} /></PlusBar>
        <TreeBox>
          <TreeList>
            {TREE.map((n, i) => n.f ? (
              <Row key={i}>
                <Folder>
                  <Chev d="down" c="#555" />
                  <I n="folder" />
                  <FolderName>{n.f}</FolderName>
                </Folder>
              </Row>
            ) : (
              <Row key={i} $item $last={n.last}>
                <RowInner $sel={n.sel}><I n={n.i!} /><span>{n.l}{n.k && <Key>{n.k}</Key>}</span></RowInner>
              </Row>
            ))}
          </TreeList>
          <VScroll>
            <Chev d="up" />
            <VThumb />
            <ArrowBottom><Chev d="down" /></ArrowBottom>
          </VScroll>
          <HScroll>
            <Chev d="left" />
            <HThumb />
            <ArrowRight><Chev d="right" /></ArrowRight>
          </HScroll>
        </TreeBox>
        <SideBtn>单构件输入</SideBtn>
        <SideBtn>报表预览</SideBtn>
      </Side>
      <Work>
        <ToolRowBox $h={29} $pt={0}>
          <Bar $w={410} $ml={627} $pl={0}>
            <Grip $w={8} />
            <SelectBox $w={57} $mr={0}>不偏移<SelectArrow><Caret $ml={0} /></SelectArrow></SelectBox>
            <Spacer $w={5} /><Sep />
            <Spacer $w={2} /><Label $w={19} $c="#888">X=</Label>
            <Spin $w={58}>0<SpinArrows><i /><i /></SpinArrows></Spin>
            <Spacer $w={2} /><Label $w={26} $c="#777">mm</Label>
            <Label $w={18} $c="#777">Y=</Label>
            <Spin $w={58}>0<SpinArrows><i /><i /></SpinArrows></Spin>
            <Spacer $w={2} /><Label $w={24} $c="#777">mm</Label>
            <Sep /><Spacer $w={3} /><Check />
            <Spacer $w={9} /><Label $w={28}>旋转</Label>
            <Spin $w={68}>0.000<SpinArrows><i /><i /></SpinArrows></Spin>
            <Spacer $w={2} /><Label $c="#777">°</Label>
          </Bar>
        </ToolRowBox>
        <ToolRowBox $h={27}>
          <Bar $w={790} $ml={1}>
            <Grip />
            <Tool t={['del', '删除', 50]} />
            <Sep $w={6} />
            <Tool t={['copy', '复制', 53, false, false, 5]} />
            <Tool t={['mirror', '镜像', 51, false, false, 2]} />
            <Sep $w={6} />
            <Tool t={['move', '移动', 51]} />
            <Tool t={['rotate', '旋转', 51]} />
            <Sep $w={6} />
            <Tool t={['extend', '延伸', 52, false, true]} />
            <Tool t={['trim', '修剪', 49, false, true, 2]} />
            <Sep $w={6} />
            <Tool t={['break', '打断', 52, false, true]} />
            <Tool t={['merge', '合并', 50]} />
            <Tool t={['split', '分割', 55, false, false, 5]} />
            <Sep $w={4} />
            <ToolEl $w={59} $off><I n="align" /><span>对齐</span><Caret $ml={1} /></ToolEl>
            <Tool t={['offset', '偏移', 50]} />
            <Tool t={['stretch', '拉伸', 51, false, false, 4]} />
            <Sep $w={6} />
            <Tool t={['hold', '设置夹点', 72, false, false, 4]} />
          </Bar>
        </ToolRowBox>
        <ToolRowBox $h={28}>
          <Bar $w={566} $ml={1}>
            <Grip $w={8} />
            <SelectBox $w={57}>基础层<SelectArrow><Caret $ml={0} /></SelectArrow></SelectBox>
            <SelectBox $w={69}>基础<SelectArrow><Caret $ml={0} /></SelectArrow></SelectBox>
            <SelectBox $w={69}>筏板基础<SelectArrow><Caret $ml={0} /></SelectArrow></SelectBox>
            <SelectBox $w={70}>FB-6<SelectArrow><Caret $ml={0} /></SelectArrow></SelectBox>
            <Spacer $w={3} /><Sep $w={6} />
            <Tool t={['attr', '属性', 50]} />
            <Tool t={['editbar', '编辑钢筋', 74, false, false, 4]} />
            <Tool t={['list', '构件列表', 74, false, false, 2]} />
            <Tool t={['pick', '拾取构件', 68]} />
          </Bar>
          <Bar $w={30} $ml={3}><Grip $w={7} /><SelectBox $w={23} $mr={0} /></Bar>
          <Bar $w={422} $ml={74}>
            <Grip $w={11} />
            <Tool t={['p2', '两点', 51]} />
            <Tool t={['parallel', '平行', 51]} />
            <Tool t={['angle', '点角', 62, true]} />
            <Tool t={['arc3', '三点辅轴', 86, true, false, 4]} />
            <Tool t={['delaxis', '删除辅轴', 77, false, false, 4]} />
            <Tool t={['dim', '尺寸标注', 80, true, false, 2]} />
          </Bar>
        </ToolRowBox>
        <ToolRowBox $h={29}>
          <Bar $w={1167} $ml={1}>
            <Grip $w={7} />
            <Pressed $w={51} $gap={3}><I n="cursor" />选择</Pressed>
            <Caret $ml={2} />
            <Spacer $w={6} /><Sep $w={8} />
            <Tool t={['point', '点', 37]} />
            <Sep $w={7} />
            <Tool t={['line', '直线', 51]} />
            <Tool t={['arc', '三点画弧', 80, true]} />
            <Spacer $w={2} />
            <SelectBox $w={57} $mr={5}><SelectArrow><Caret $ml={0} /></SelectArrow></SelectBox>
            <Tool t={['rect', '矩形', 50]} />
            <Sep $w={8} />
            <Tool t={['auto', '自动生成板', 88]} />
            <Tool t={['beamsplit', '按梁分割', 74, false, false, 4]} />
            <Tool t={['section', '设置筏板变截面', 112, false, false, 4]} />
            <Tool t={['viewbar', '查看板内钢筋', 99, false, false, 4]} />
            <Tool t={['slope', '设置所有边坡', 111, true, false, 4]} />
            <Tool t={['unslope', '取消所有边坡', 114, true, false, 4]} />
            <Tool t={['tilt', '三点定义斜筏板', 119, true]} />
            <Tool t={['elev', '查改标高', 72, false, false, 5]} />
          </Bar>
        </ToolRowBox>
        <CanvasBox><Scene /></CanvasBox>
        <ToolRowBox $h={29} $pt={2}>
          <Bar $w={474} $ml={1}>
            <Grip />
            <ToolEl $w={48} $gap={5}><I n="ortho" /><span>正交</span></ToolEl>
            <Pressed $w={75}><I n="snap" />对象捕捉</Pressed>
            <Pressed $w={75}><I n="dyn" />动态输入</Pressed>
            <Grip $w={13} />
            <Tool t={['cross', '交点', 48, false, false, 4]} />
            <Pressed $w={51} $gap={3}><I n="perp" />垂点</Pressed>
            <Pressed $w={51}><I n="mid" />中点</Pressed>
            <Spacer $w={4} />
            <Tool t={['vertex', '顶点', 49]} />
            <Tool t={['coord', '坐标', 50, false, false, 4]} />
          </Bar>
        </ToolRowBox>
      </Work>
    </Body>
    <Status>
      <Cell $w={148}><Key>X=24562 Y=16717</Key></Cell>
      <Cell $w={77}>层高:<Key>3.52m</Key></Cell>
      <Cell $w={98}>底标高:<Key>-3.55m</Key></Cell>
      <Cell $w={48}><Key>1(1)</Key></Cell>
      <Cell $grow>按鼠标左键指定第一个角点，或拾取构件图元</Cell>
      <Cell $w={69}><Key>335.4 FPS</Key></Cell>
    </Status>
    <Task>
      <Start><svg width="16" height="16" viewBox="0 0 16 16"><path d="M0 2.500l7-1v6H0z M8 1.300l8-1.300v7.500H8z M0 8.500h7v6l-7-1z M8 8.500h8V16l-8-1.300z" fill="#fff" /></svg></Start>
      <Search>
        <svg width="20" height="20" viewBox="0 0 20 20"><circle cx="10" cy="10" r="8" fill="none" stroke="#f2f2f2" strokeWidth="2" /></svg>
        <SearchText>在这里输入你要搜索的内容</SearchText>
        <Mic><svg width="16" height="18" viewBox="0 0 16 18"><rect x="5" y="1" width="6" height="11" rx="3" fill="none" stroke="#aaa" /><path d="M3 8c0 6 10 6 10 0 M8 13v3 M5 17h6" stroke="#aaa" fill="none" /></svg></Mic>
      </Search>
      <Spacer $w={3} />
      <Slot><svg width="22" height="22" viewBox="0 0 22 22"><path d="M11 10C5 10 1 7 3 3s8-2 8 7c0-9 6-11 8-7s-2 7-8 7c6 0 10 3 8 7s-8 2-8-7c0 9-6 11-8 7s2-7 8-7z" fill="#e6e6e6" /></svg></Slot>
      <Slot><svg width="20" height="20" viewBox="0 0 20 20"><path d="M16 4a8 8 0 1 0 2 7c-1 4-6 5-8 3-3-2-2-7 2-7 3 0 3 4 1 4" fill="none" stroke="#cfcfcf" strokeWidth="1.500" /></svg></Slot>
      <TaskSep />
      <Slot><svg width="22" height="22" viewBox="0 0 22 22"><path d="M20 13H6c0 5 7 7 13 3v4c-8 4-17 0-17-9S10-1 16 3c4 2 5 6 4 10zM6 9h9c0-5-8-5-9 0z" fill="#0f78d4" /></svg></Slot>
      <Slot><svg width="20" height="22" viewBox="0 0 20 22"><path d="M2 6h16v15H2z" fill="#fff" /><path d="M6 7V3c0-3 8-3 8 0v4" fill="none" stroke="#fff" strokeWidth="1.500" /><path d="M6 10h3v3H6z M11 10h3v3h-3z M6 15h3v3H6z M11 15h3v3h-3z" fill="#111" /></svg></Slot>
      <Slot $w={50} $bar><svg width="22" height="20" viewBox="0 0 22 20"><path d="M1 2h8l2 2h10v15H1z" fill="#e9c766" /><path d="M1 7h20v12H1z" fill="#f7dc8a" /><path d="M7 19v-6l4-3 4 3v6z" fill="#2f9ad6" /></svg></Slot>
      <Slot $on $bar><svg width="24" height="24" viewBox="0 0 24 24"><rect width="24" height="24" rx="4" fill="#1e90e8" /><path d="M12 4v16 M4 12h16 M5 12a4 4 0 0 1 4-4 M19 12a4 4 0 0 1-4 4" stroke="#fff" strokeWidth="2" fill="none" /></svg></Slot>
      <Slot $ml={1} $bar><svg width="26" height="28" viewBox="0 0 26 28"><path d="M22 3C10 0 3 7 3 14c0 8 8 12 14 11 6-2 7-9 5-13h-9v5h4c0 3-6 3-7-2-1-6 6-9 12-7z" fill="#1e90e8" /></svg></Slot>
      <Slot $bar><svg width="24" height="24" viewBox="0 0 24 24"><circle cx="12" cy="12" r="10" fill="#7ac943" /><circle cx="12" cy="12" r="7" fill="#eef8e0" /><path d="M6 13h12 M8 9l4-3 4 3" stroke="#6ab52f" strokeWidth="2" fill="none" /></svg></Slot>
      <Spacer $w={211} />
      <TrayCell $w={60}><span>46%</span><span>CPU使用</span></TrayCell>
      <TrayCell $w={20} $ml={10}><svg width="12" height="8" viewBox="0 0 12 8"><path d="M1 7l5-5 5 5" stroke="#eee" strokeWidth="1.300" fill="none" /></svg></TrayCell>
      <TrayCell $w={20} $ml={6}><svg width="18" height="12" viewBox="0 0 18 12"><rect x="6" y="2" width="11" height="8" fill="#bbb" stroke="#eee" /><path d="M2 1v4 M5 1v4 M1 5h5v3H3v3" stroke="#eee" fill="none" /></svg></TrayCell>
      <TrayCell $w={20} $ml={3}><svg width="16" height="14" viewBox="0 0 16 14"><path d="M2 13a2 2 0 0 1 3-2 M1 8a7 7 0 0 1 6 4 M1 4a11 11 0 0 1 10 9 M4 1a14 14 0 0 1 11 12" stroke="#ccc" fill="none" strokeDasharray="1.500 1" /></svg></TrayCell>
      <TrayCell $w={20} $ml={2}><svg width="16" height="14" viewBox="0 0 16 14"><path d="M1 5h3l4-4v12l-4-4H1z M10 4c2 2 2 4 0 6 M12 2c3 3 3 7 0 10" stroke="#eee" fill="none" /></svg></TrayCell>
      <TrayCell $w={20} $ml={4}><Ime>中</Ime></TrayCell>
      <TrayCell $w={20} $ml={9}><svg width="16" height="18" viewBox="0 0 16 18"><path d="M2 2l13-2 1 15-14 3z" fill="#ea5a20" /><path d="M12 5H6v3.500h5V13H5" stroke="#fff" strokeWidth="2" fill="none" /></svg></TrayCell>
      <TrayCell $w={70} $ml={8}><span>19:11</span><span>2017/6/8</span></TrayCell>
      <TrayCell $w={46}>
        <svg width="16" height="18" viewBox="0 0 16 18"><path d="M0 0h16v13H6l-3 3v-3H0z" fill="#fff" /><path d="M3 3h10 M3 6h10 M3 9h7" stroke="#222" /></svg>
        <Badge>5</Badge>
      </TrayCell>
    </Task>

    <Sogou>
      <svg width="23" height="24" viewBox="0 0 23 24"><path d="M1 4l20-4 2 19-20 5z" fill="#ee5a1e" /><path d="M16 7H8v4.500h7V17H6" stroke="#fff" strokeWidth="3" fill="none" /></svg>
      <SogouBar>
        <SogouZh>中</SogouZh>
        <svg width="13" height="14" viewBox="0 0 13 14"><circle cx="3" cy="4" r="1.500" fill="#0b73c8" /><path d="M9 4c2 2 0 5-2 7" stroke="#0b73c8" strokeWidth="2" fill="none" /></svg>
        <Spacer $w={6} />
        <svg width="14" height="18" viewBox="0 0 14 18"><rect x="4" y="1" width="6" height="11" rx="3" fill="#0b73c8" /><path d="M2 8c0 6 10 6 10 0 M7 13v3" stroke="#0b73c8" fill="none" /></svg>
        <Spacer $w={8} />
        <svg width="18" height="14" viewBox="0 0 18 14"><rect x="1" y="1" width="16" height="12" rx="2" fill="#0b73c8" /><path d="M3 4h12 M3 7h12 M5 10h8" stroke="#fff" strokeDasharray="1.500 1" /></svg>
        <Spacer $w={8} />
        <svg width="18" height="18" viewBox="0 0 18 18"><circle cx="7" cy="5" r="3" fill="#aebcc8" /><path d="M2 14c0-6 10-6 10 0z" fill="#aebcc8" /><rect x="10" y="10" width="7" height="7" fill="#d0dae2" /></svg>
        <Spacer $w={3} />
        <svg width="16" height="16" viewBox="0 0 16 16"><path d="M5 1h6l4 3-2 3-2-1v9H5V6L3 7 1 4z" fill="#0b73c8" /></svg>
        <Spacer $w={6} />
        <svg width="16" height="16" viewBox="0 0 16 16"><path d="M14 2a4 4 0 0 0-5 5l-7 6 2 2 6-7a4 4 0 0 0 5-5l-3 2-1-1z" fill="#0b73c8" /></svg>
      </SogouBar>
    </Sogou>
    <Orb>56</Orb>
    <WinControls>
      <WinBtn><svg width="10" height="10" viewBox="0 0 10 10"><path d="M0 5h10" stroke="#222" /></svg></WinBtn>
      <WinBtn><svg width="10" height="11" viewBox="0 0 10 11"><path d="M.5 2.500h7v8h-7z M2.500 2.500V.5h7v8h-2" stroke="#222" fill="none" /></svg></WinBtn>
      <WinBtn><svg width="11" height="11" viewBox="0 0 11 11"><path d="M.5.5l10 10 M10.500.5l-10 10" stroke="#222" /></svg></WinBtn>
    </WinControls>
  </Page>
);

export default App;
